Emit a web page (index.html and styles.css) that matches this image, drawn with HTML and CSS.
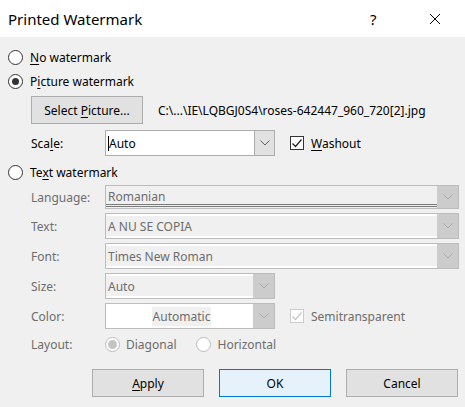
FILE: index.html
```html
<!DOCTYPE html>
<html>
<head>
<meta charset="utf-8">
<link rel="stylesheet" href="styles.css">
</head>
<body>
<div class="dialog">
  <div class="titlebar">
    <span class="title">Printed Watermark</span>
    <span class="help">?</span>
    <span class="close">
      <svg width="12" height="12" viewBox="0 0 12 12"><path d="M1 1 L11 11 M11 1 L1 11" stroke="#000" stroke-width="1" fill="none"/></svg>
    </span>
  </div>
  <div class="content">
    <div class="radio-row row-no"><span class="radio"></span><span class="rtext"><u>N</u>o watermark</span></div>
    <div class="radio-row row-pic"><span class="radio checked"></span><span class="rtext">P<u>i</u>cture watermark</span></div>
    <div class="pic-row">
      <div class="btn"><span>Select <u>P</u>icture...</span></div>
      <span class="path">C:\...\IE\LQBGJ0S4\roses-642447_960_720[2].jpg</span>
    </div>
    <div class="field-row row-scale">
      <span class="label">Sca<u>l</u>e:</span>
      <div class="combo short">
        <span class="ctext"><span class="caret"></span>Auto</span>
        <span class="drop"><svg width="10" height="6" viewBox="0 0 10 6"><path d="M0.5 0.5 L5 5 L9.5 0.5" stroke="#606060" fill="none"/></svg></span>
      </div>
      <div class="check"><span class="box"><svg width="12" height="12" viewBox="0 0 12 12"><path d="M1.5 6.5 L4.5 9.5 L10.5 2.5" stroke="#222" stroke-width="1.2" fill="none"/></svg></span><span class="ctext2"><u>W</u>ashout</span></div>
    </div>
    <div class="radio-row row-text"><span class="radio"></span><span class="rtext">Te<u>x</u>t watermark</span></div>
    <div class="field-row row-lang dis">
      <span class="label">Language:</span>
      <div class="combo long lang">
        <span class="ctext">Romanian</span>
        <span class="drop"><svg width="10" height="6" viewBox="0 0 10 6"><path d="M0.5 0.5 L5 5 L9.5 0.5" stroke="#aaaaaa" fill="none"/></svg></span>
      </div>
    </div>
    <div class="field-row row-gap dis">
      <span class="label">Text:</span>
      <div class="combo long edit">
        <span class="ctext">A NU SE COPIA</span>
        <span class="drop"><svg width="10" height="6" viewBox="0 0 10 6"><path d="M0.5 0.5 L5 5 L9.5 0.5" stroke="#aaaaaa" fill="none"/></svg></span>
      </div>
    </div>
    <div class="field-row row-gap dis">
      <span class="label">Font:</span>
      <div class="combo long edit">
        <span class="ctext">Times New Roman</span>
        <span class="drop"><svg width="10" height="6" viewBox="0 0 10 6"><path d="M0.5 0.5 L5 5 L9.5 0.5" stroke="#aaaaaa" fill="none"/></svg></span>
      </div>
    </div>
    <div class="field-row row-gap dis">
      <span class="label">Size:</span>
      <div class="combo short edit">
        <span class="ctext">Auto</span>
        <span class="drop"><svg width="10" height="6" viewBox="0 0 10 6"><path d="M0.5 0.5 L5 5 L9.5 0.5" stroke="#aaaaaa" fill="none"/></svg></span>
      </div>
    </div>
    <div class="field-row row-gap dis">
      <span class="label">Color:</span>
      <div class="combo short color">
        <span class="ctext"><span class="auto">Automatic</span></span>
        <span class="drop"><svg width="10" height="6" viewBox="0 0 10 6"><path d="M0.5 0.5 L5 5 L9.5 0.5" stroke="#aaaaaa" fill="none"/></svg></span>
      </div>
      <div class="check dis"><span class="box"><svg width="12" height="12" viewBox="0 0 12 12"><path d="M1.5 6.5 L4.5 9.5 L10.5 2.5" stroke="#c4c4c4" stroke-width="1.2" fill="none"/></svg></span><span class="ctext2">Semitransparent</span></div>
    </div>
    <div class="field-row row-layout dis">
      <span class="label">Layout:</span>
      <div class="lradio"><span class="radio dchecked"></span><span>Diagonal</span></div>
      <div class="lradio second"><span class="radio dis-r"></span><span>Horizontal</span></div>
    </div>
    <div class="buttons">
      <div class="btn"><span><u>A</u>pply</span></div>
      <div class="btn default"><span>OK</span></div>
      <div class="btn"><span>Cancel</span></div>
    </div>
  </div>
</div>
</body>
</html>
```
FILE: styles.css
```css
* { box-sizing: border-box; }
html, body { margin: 0; padding: 0; }
body {
  width: 465px;
  height: 407px;
  background: #f0f0f0;
  font-family: "Noto Sans", "Open Sans", sans-serif;
  font-size: 12px;
  color: #000;
  overflow: hidden;
}
u { text-decoration: underline; text-underline-offset: 2px; }
.titlebar {
  height: 37px;
  background: #fff;
  display: flex;
  align-items: center;
  padding-left: 8px;
}
.title { font-size: 15px; flex: 1; }
.help { font-size: 15px; width: 12px; margin-right: 47px; }
.close { width: 12px; height: 12px; margin-right: 24px; display: flex; }
.content { padding-left: 8px; }
.radio-row { display: flex; align-items: center; height: 20px; }
.row-no { margin-top: 10px; }
.row-pic { margin-top: 4px; }
.row-text { margin-top: 6px; }
.radio {
  width: 15px; height: 15px;
  border: 1px solid #333;
  border-radius: 50%;
  background: #fff;
  position: relative;
  flex: none;
}
.radio.checked::after {
  content: "";
  position: absolute;
  left: 3px; top: 3px;
  width: 7px; height: 7px;
  border-radius: 50%;
  background: #333;
}
.rtext { margin-left: 7px; }
.pic-row { display: flex; align-items: center; margin-top: 5px; margin-left: 23px; }
.btn {
  width: 112px; height: 28px;
  background: #e1e1e1;
  border: 1px solid #adadad;
  display: flex; align-items: center; justify-content: center;
}
.btn.default { background: #e5f1fb; border-color: #0078d7; }
.path { margin-left: 15px; }
.field-row { display: flex; align-items: center; margin-left: 23px; }
.row-scale { margin-top: 6px; }
.label { width: 74px; }
.dis .label, .dis .ctext, .dis .ctext2, .dis span { color: #6d6d6d; }
.combo {
  height: 26px;
  border: 1px solid #adadad;
  background: #fff;
  display: flex;
}
.combo.short { width: 170px; }
.combo.long { width: 354px; }
.combo .ctext { flex: 1; display: flex; align-items: center; padding-left: 2px; }
.caret { width: 1px; height: 15px; background: #000; margin-right: 0; }
.combo .drop {
  width: 20px;
  background: #e1e1e1;
  border-left: 1px solid #adadad;
  display: flex; align-items: center; justify-content: center;
}
.row-lang { margin-top: 3px; }
.row-gap { margin-top: 4px; }
.dis .combo { border-color: #bcbcbc; background: #f0f0f0; }
.dis .combo .drop { background: #cccccc; border-left: none; width: 21px; }
.combo.lang { height: 24px; }
.combo.lang .ctext { border-bottom: 3px double #7a7a7a; margin-bottom: 1px; padding-top: 2px; }
.combo.edit .ctext { border-top: 2px solid #fff; border-bottom: 2px solid #fff; }
.combo.color { background: #fff; }
.combo.color .ctext { justify-content: center; padding-left: 4px; padding-right: 0; }
.auto { background: #f0f0f0; padding: 1px 1px; }
.check { display: flex; align-items: center; margin-left: 15px; }
.box {
  width: 14px; height: 14px;
  border: 1px solid #333;
  background: #fff;
  display: flex; align-items: center; justify-content: center;
}
.check.dis .box { border-color: #cccccc; }
.ctext2 { margin-left: 7px; }
.row-layout { margin-top: 5px; height: 20px; }
.lradio { display: flex; align-items: center; }
.lradio span:last-child { margin-left: 6px; }
.lradio.second { margin-left: 20px; }
.radio.dchecked { border-color: #bcbcbc; }
.radio.dchecked::after {
  content: "";
  position: absolute;
  left: 2px; top: 2px;
  width: 9px; height: 9px;
  border-radius: 50%;
  background: #c4c4c4;
}
.radio.dis-r { border-color: #bcbcbc; }
.buttons { display: flex; justify-content: flex-end; gap: 15px; margin-top: 15px; padding-right: 7px; }
```
